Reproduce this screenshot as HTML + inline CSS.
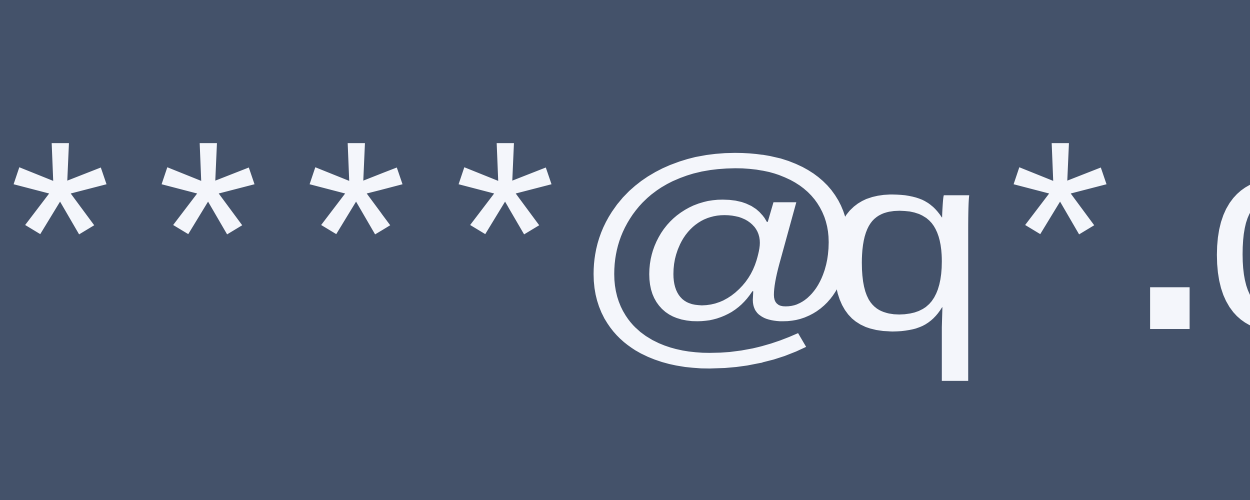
<!DOCTYPE html>
<html><head><meta charset="utf-8"><style>
html,body{margin:0;padding:0;}
body{width:1250px;height:500px;background:#44526a;overflow:hidden;position:relative;font-family:"Liberation Sans","DejaVu Sans",sans-serif;}
span{position:absolute;top:93px;width:200px;text-align:center;font-size:280px;line-height:280px;color:#f4f6fb;}
.a{top:103px;font-size:260px;line-height:260px}
</style></head><body>
<span class="a" style="left:-40px">*</span>
<span class="a" style="left:108px">*</span>
<span class="a" style="left:256px">*</span>
<span class="a" style="left:405px">*</span>
<span style="left:590px;top:108px;font-size:250px;transform:scaleX(1.2)">@</span>
<span style="left:805px;top:118px;font-size:250px;line-height:250px;transform:scaleX(1.2)">q</span>
<span class="a" style="left:960px">*</span>
<span style="left:1070px;font-weight:bold">.</span>
<span style="left:1205px;text-align:left">c</span>
</body></html>
